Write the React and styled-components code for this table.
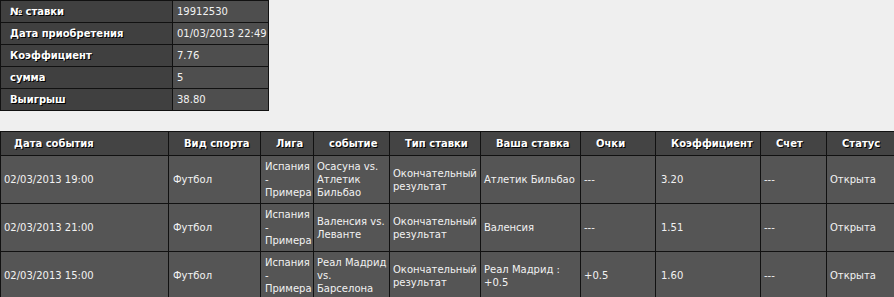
import React from "react";
import styled, { createGlobalStyle } from "styled-components";

const GlobalStyle = createGlobalStyle`
  html, body {
    margin: 0;
    padding: 0;
    background: #efefef;
    overflow: hidden;
  }
  body {
    font-family: "DejaVu Sans", Tahoma, sans-serif;
    font-size: 10px;
    color: #f2f2f2;
  }
`;

const Page = styled.div`
  display: flex;
  flex-direction: column;
  gap: 20px;
`;

const InfoTable = styled.table`
  width: 269px;
  border-collapse: collapse;
  table-layout: fixed;
  border: 1px solid #111;
`;

const InfoLabel = styled.th`
  width: 162px;
  height: 21px;
  padding: 0 0 0 9px;
  background: #404040;
  border: 1px solid #111;
  text-align: left;
  font-weight: bold;
  color: #fff;
  text-shadow: 1px 1px 0 #000;
`;

const InfoValue = styled.td`
  height: 21px;
  padding: 0 0 0 4px;
  background: #4e4e4e;
  border: 1px solid #111;
  white-space: nowrap;
`;

const BetTable = styled.table`
  width: 900px;
  border-collapse: collapse;
  table-layout: fixed;
  border: 1px solid #111;
`;

const HeadCell = styled.th`
  height: 23px;
  padding: 0 0 0 ${(p) => p.$pad ?? 15}px;
  background: #444;
  border: 1px solid #111;
  text-align: left;
  font-weight: bold;
  color: #fff;
  white-space: nowrap;
  text-shadow: 1px 1px 0 #000;
`;

const Cell = styled.td`
  height: 43px;
  padding: 2px 1px 2px ${(p) => p.$pad ?? 3}px;
  background: #555;
  border: 1px solid #111;
  line-height: 13px;
  vertical-align: middle;
`;

const info = [
  ["№ ставки", "19912530"],
  ["Дата приобретения", "01/03/2013 22:49"],
  ["Коэффициент", "7.76"],
  ["сумма", "5"],
  ["Выигрыш", "38.80"],
];

const columns = [
  { title: "Дата события", width: 168, pad: 13 },
  { title: "Вид спорта", width: 92 },
  { title: "Лига", width: 53 },
  { title: "событие", width: 76 },
  { title: "Тип ставки", width: 91 },
  { title: "Ваша ставка", width: 100 },
  { title: "Очки", width: 75 },
  { title: "Коэффициент", width: 105 },
  { title: "Счет", width: 66 },
  { title: "Статус", width: 74 },
];

const bets = [
  {
    date: "02/03/2013 19:00",
    event: "Осасуна vs. Атлетик Бильбао",
    pick: "Атлетик Бильбао",
    points: "---",
    odds: "3.20",
  },
  {
    date: "02/03/2013 21:00",
    event: "Валенсия vs. Леванте",
    pick: "Валенсия",
    points: "---",
    odds: "1.51",
  },
  {
    date: "02/03/2013 15:00",
    event: "Реал Мадрид vs. Барселона",
    pick: "Реал Мадрид : +0.5",
    points: "+0.5",
    odds: "1.60",
  },
];

export default function App() {
  return (
    <>
      <GlobalStyle />
      <Page>
        <InfoTable>
          <tbody>
            {info.map(([label, value]) => (
              <tr key={label}>
                <InfoLabel>{label}</InfoLabel>
                <InfoValue>{value}</InfoValue>
              </tr>
            ))}
          </tbody>
        </InfoTable>

        <BetTable>
          <colgroup>
            {columns.map((c) => (
              <col key={c.title} style={{ width: c.width }} />
            ))}
          </colgroup>
          <thead>
            <tr>
              {columns.map((c) => (
                <HeadCell key={c.title} $pad={c.pad}>
                  {c.title}
                </HeadCell>
              ))}
            </tr>
          </thead>
          <tbody>
            {bets.map((b) => (
              <tr key={b.date}>
                <Cell>{b.date}</Cell>
                <Cell $pad={4}>Футбол</Cell>
                <Cell $pad={4}>Испания - Примера</Cell>
                <Cell>{b.event}</Cell>
                <Cell>Окончательный результат</Cell>
                <Cell>{b.pick}</Cell>
                <Cell>{b.points}</Cell>
                <Cell $pad={5}>{b.odds}</Cell>
                <Cell>---</Cell>
                <Cell>Открыта</Cell>
              </tr>
            ))}
          </tbody>
        </BetTable>
      </Page>
    </>
  );
}
